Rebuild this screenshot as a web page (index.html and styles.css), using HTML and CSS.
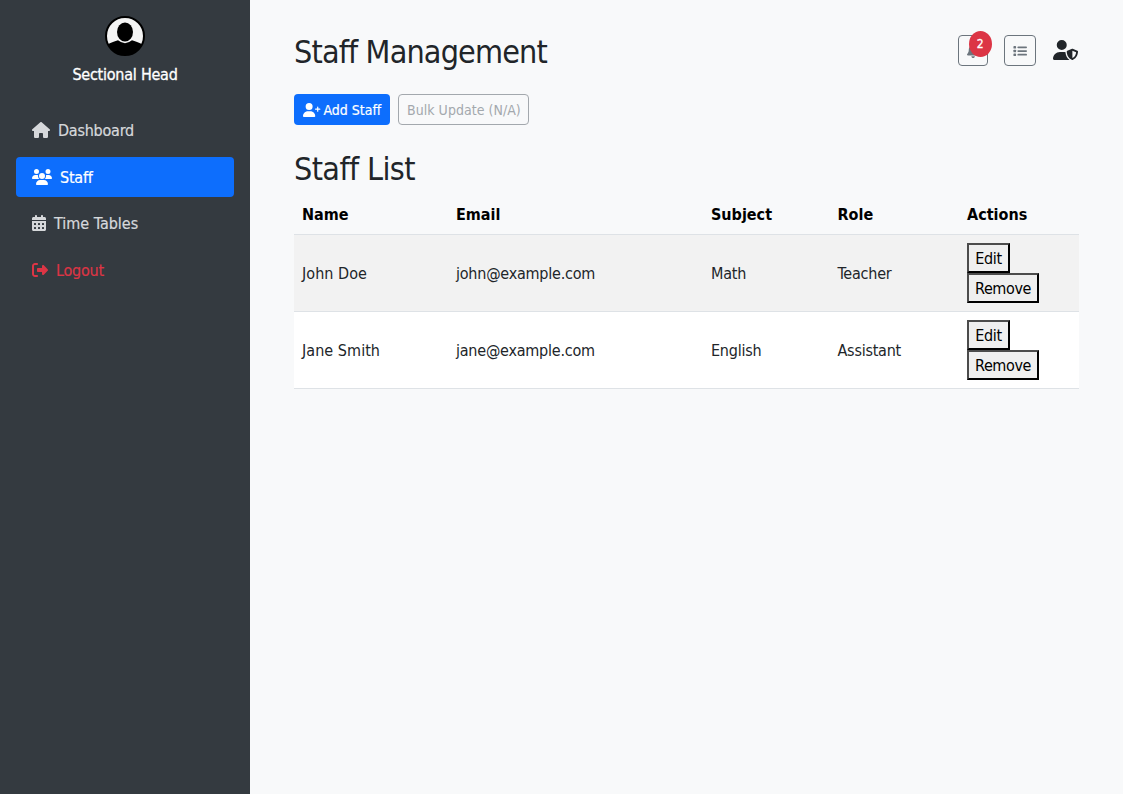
FILE: index.html
```html
<!DOCTYPE html>
<html lang="en">
<head>
<meta charset="utf-8">
<title>Staff Management</title>
<link rel="stylesheet" href="styles.css">
</head>
<body>
<div class="app">
  <aside class="sidebar">
    <div class="profile">
      <svg class="avatar" viewBox="0 0 40 40"><defs><clipPath id="face"><circle cx="20" cy="20" r="19"/></clipPath></defs><circle cx="20" cy="20" r="19" fill="#f4f4f4"/><g clip-path="url(#face)"><path d="M0 40V30Q4 27 13 24.300Q20 30 27 24.300Q36 27 40 30V40Z"/><ellipse cx="20" cy="16" rx="8" ry="9.500"/></g><circle cx="20" cy="20" r="19" fill="none" stroke="#000" stroke-width="2"/></svg>
      <div class="profile-name">Sectional Head</div>
    </div>
    <nav class="nav">
      <a class="nav-link"><svg class="icon house" viewBox="0 0 576 512"><path d="M575.8 255.5c0 18-15 32.1-32 32.1l-32 0 .7 160.2c0 2.7-.2 5.4-.5 8.1l0 16.2c0 22.1-17.9 40-40 40l-16 0c-1.1 0-2.2 0-3.3-.1c-1.4 .1-2.8 .1-4.2 .1L416 512l-24 0c-22.1 0-40-17.9-40-40l0-24 0-64c0-17.7-14.3-32-32-32l-64 0c-17.7 0-32 14.3-32 32l0 64 0 24c0 22.1-17.9 40-40 40l-24 0-31.9 0c-1.5 0-3-.1-4.5-.2c-1.2 .1-2.4 .2-3.6 .2l-16 0c-22.1 0-40-17.9-40-40l0-112c0-.9 0-1.9 .1-2.8l0-69.7-32 0c-18 0-32-14-32-32.1c0-9 3-17 10-24L266.4 8c7-7 15-8 22-8s15 2 21 7L564.8 231.5c8 7 12 15 11 24z"/></svg><span>Dashboard</span></a>
      <a class="nav-link active"><svg class="icon users" viewBox="0 0 640 512"><path d="M144 0a80 80 0 1 1 0 160A80 80 0 1 1 144 0zM512 0a80 80 0 1 1 0 160A80 80 0 1 1 512 0zM0 298.7C0 239.8 47.8 192 106.7 192l42.7 0c15.9 0 31 3.5 44.6 9.7c-1.3 7.2-1.9 14.7-1.9 22.3c0 38.2 16.8 72.5 43.3 96L21.3 320C9.6 320 0 310.4 0 298.7zM405.3 320c26.6-23.5 42.7-57.8 42.7-96c0-7.6-.7-15-1.9-22.3c13.6-6.3 28.7-9.7 44.6-9.7l42.7 0C592.2 192 640 239.8 640 298.7c0 11.8-9.6 21.3-21.3 21.3zM224 224a96 96 0 1 1 192 0 96 96 0 1 1 -192 0zM128 485.3C128 411.7 187.7 352 261.3 352l117.3 0C452.3 352 512 411.7 512 485.3c0 14.7-11.9 26.7-26.7 26.7l-330.7 0c-14.7 0-26.7-11.9-26.7-26.7z"/></svg><span>Staff</span></a>
      <a class="nav-link tables"><svg class="icon calendar" viewBox="0 0 448 512"><path fill-rule="evenodd" d="M128 0c17.7 0 32 14.3 32 32v32h128V32c0-17.7 14.3-32 32-32s32 14.3 32 32v32h48c26.5 0 48 21.5 48 48v48H0v-48C0 85.500 21.500 64 48 64h48V32c0-17.700 14.300-32 32-32zM0 192h448v272c0 26.500-21.500 48-48 48H48c-26.500 0-48-21.500-48-48zM80 256h32q16 0 16 16v32q0 16-16 16H80q-16 0-16-16v-32q0-16 16-16zM208 256h32q16 0 16 16v32q0 16-16 16h-32q-16 0-16-16v-32q0-16 16-16zM336 256h32q16 0 16 16v32q0 16-16 16h-32q-16 0-16-16v-32q0-16 16-16zM80 384h32q16 0 16 16v32q0 16-16 16H80q-16 0-16-16v-32q0-16 16-16zM208 384h32q16 0 16 16v32q0 16-16 16h-32q-16 0-16-16v-32q0-16 16-16zM336 384h32q16 0 16 16v32q0 16-16 16h-32q-16 0-16-16v-32q0-16 16-16z"/></svg><span>Time Tables</span></a>
      <a class="nav-link logout"><svg class="icon exit" viewBox="0 0 512 512"><path d="M377.9 105.900L500.700 228.700c7.200 7.200 11.300 17.100 11.300 27.300s-4.100 20.100-11.300 27.300L377.900 406.100c-6.400 6.400-15 9.900-24 9.900c-18.700 0-33.900-15.200-33.900-33.900V320H192c-17.700 0-32-14.300-32-32v-64c0-17.700 14.300-32 32-32h128v-62.100c0-18.700 15.200-33.900 33.900-33.900c9 0 17.600 3.600 24 9.900zM160 96H96c-17.700 0-32 14.300-32 32v256c0 17.700 14.300 32 32 32h64c17.700 0 32 14.300 32 32s-14.300 32-32 32H96c-53 0-96-43-96-96V128C0 75 43 32 96 32h64c17.700 0 32 14.300 32 32s-14.300 32-32 32z"/></svg><span>Logout</span></a>
    </nav>
  </aside>
  <main class="main">
    <header class="topbar">
      <h2>Staff Management</h2>
      <div class="tools">
        <button class="tool"><svg class="bell" viewBox="0 0 448 512"><path d="M224 0c-17.700 0-32 14.300-32 32v19.200C119 66 64 130.600 64 208v18.800c0 47-17.300 92.400-48.500 127.600l-7.400 8.300c-8.400 9.400-10.400 22.900-5.300 34.400S19.400 416 32 416h384c12.600 0 24-7.400 29.200-18.900s3.100-25-5.300-34.400l-7.400-8.300C401.300 319.200 384 273.900 384 226.800V208c0-77.400-55-142-128-156.800V32c0-17.700-14.300-32-32-32zM269.300 493.300c12-12 18.700-28.300 18.700-45.300H160c0 17 6.700 33.300 18.700 45.300S207 512 224 512s33.300-6.700 45.300-18.700z"/></svg><span class="badge">2</span></button>
        <button class="tool"><svg class="list" viewBox="0 0 512 512"><rect x="16" y="72" width="96" height="96" rx="24"/><rect x="16" y="208" width="96" height="96" rx="24"/><rect x="16" y="344" width="96" height="96" rx="24"/><rect x="160" y="88" width="352" height="64" rx="32"/><rect x="160" y="224" width="352" height="64" rx="32"/><rect x="160" y="360" width="352" height="64" rx="32"/></svg></button>
        <svg class="shield" viewBox="0 0 640 512"><path fill-rule="evenodd" d="M224 256A128 128 0 1 0 224 0a128 128 0 1 0 0 256zm-45.700 48C79.800 304 0 383.800 0 482.300C0 498.700 13.300 512 29.700 512h388.600c1.800 0 3.500-.2 5.300-.5c-76.300-55.100-99.800-141-103.100-200.200c-16.100-4.800-33.100-7.300-50.700-7.300zM487.100 225.700l-120 48C358 277.400 352 286.200 352 296c0 63.300 25.900 168.800 134.800 214.200c5.900 2.500 12.600 2.500 18.500 0C614.100 464.800 640 359.300 640 296c0-9.800-6-18.600-15.100-22.300l-120-48c-5.700-2.300-12.100-2.300-17.800 0zM591.400 312c-3.900 50.700-27.200 116.700-95.400 149.700V273.900z"/></svg>
      </div>
    </header>
    <div class="actions">
      <button class="btn primary"><svg viewBox="0 0 640 512"><path d="M96 128a128 128 0 1 1 256 0A128 128 0 1 1 96 128zM0 482.300C0 383.800 79.800 304 178.300 304h91.400C368.200 304 448 383.800 448 482.300c0 16.400-13.300 29.700-29.700 29.700H29.700C13.300 512 0 498.700 0 482.300zM516 300v-54h-54q-22 0-22-22t22-22h54v-54q0-22 22-22t22 22v54h54q22 0 22 22t-22 22h-54v54q0 22-22 22t-22-22z"/></svg><span>Add Staff</span></button>
      <button class="btn outline" disabled><span>Bulk Update (N/A)</span></button>
    </div>
    <h2 class="list-title">Staff List</h2>
    <table class="table">
      <colgroup><col class="c1"><col class="c2"><col class="c3"><col class="c4"><col class="c5"></colgroup>
      <thead><tr><th>Name</th><th>Email</th><th>Subject</th><th>Role</th><th>Actions</th></tr></thead>
      <tbody>
        <tr class="striped"><td class="name">John Doe</td><td>john@example.com</td><td>Math</td><td>Teacher</td><td class="row-actions"><button class="plain edit">Edit</button><button class="plain remove">Remove</button></td></tr>
        <tr><td class="name">Jane Smith</td><td>jane@example.com</td><td>English</td><td>Assistant</td><td class="row-actions"><button class="plain edit">Edit</button><button class="plain remove">Remove</button></td></tr>
      </tbody>
    </table>
  </main>
</div>
</body>
</html>
```
FILE: styles.css
```css
* { box-sizing: border-box; }
body { margin: 0; background: #f8f9fa; color: #212529; font: 16px/24px "Segoe UI", Tahoma, "DejaVu Sans Condensed", "DejaVu Sans", sans-serif; font-stretch: condensed; letter-spacing: -0.23px; }
button { font: inherit; font-stretch: inherit; letter-spacing: inherit; }
svg { fill: currentColor; display: block; flex: none; }
.app { display: flex; height: 794px; }
.sidebar { width: 250px; background: #343a40; padding: 16px; flex: none; }
.profile { display: flex; flex-direction: column; align-items: center; color: #fff; height: 94px; }
.avatar { width: 40px; height: 40px; fill: #000; }
.profile-name { margin-top: 7px; white-space: nowrap; letter-spacing: -0.24px; -webkit-text-stroke: 0.3px; }
.nav { display: flex; flex-direction: column; gap: 6.67px; }
.nav-link { display: flex; align-items: center; gap: 8px; height: 40px; padding: 0 16px; color: #d6d8db; border-radius: 4px; white-space: nowrap; -webkit-text-stroke: 0.2px; }
.nav-link span { padding-top: 2px; }
.nav-link svg { stroke: none; }
.nav-link.active { background: #0d6efd; color: #fff; }
.nav-link.tables { letter-spacing: 0; }
.nav-link.logout { color: #dc3545; }
.icon { height: 16px; }
.house { width: 18px; }
.users { width: 20px; }
.calendar { width: 14px; }
.exit { width: 16px; }
.main { flex: 1; padding: 32px 44px; }
.topbar { display: flex; justify-content: space-between; height: 38px; }
h2 { margin: 0; padding-top: 1px; font-size: 32px; line-height: 38px; font-weight: 400; letter-spacing: -0.83px; white-space: nowrap; }
.tools { display: flex; align-items: center; gap: 16px; height: 37px; }
.tool { position: relative; height: 31px; border: 1px solid #6c757d; border-radius: 4px; background: transparent; color: #6c757d; padding: 0 8px; display: flex; align-items: center; }
.bell { width: 12.25px; height: 14px; }
.list { width: 14px; height: 14px; }
.shield { width: 25px; height: 20px; margin: -2px 1px 0 1px; }
.badge { position: absolute; left: 10px; top: -5px; width: 23px; height: 26px; border-radius: 50%; background: #dc3545; color: #fff; font-size: 12px; line-height: 27px; text-align: center; letter-spacing: 0; -webkit-text-stroke: 0.3px; }
.actions { display: flex; gap: 8px; margin-top: 24px; }
.btn { height: 31px; border: 1px solid transparent; border-radius: 4px; padding: 0 8px; font-size: 14px; line-height: 21px; display: flex; align-items: center; gap: 3px; white-space: nowrap; letter-spacing: 0; }
.btn span { padding-top: 2px; }
.primary { width: 96px; background: #0d6efd; color: #fff; -webkit-text-stroke: 0.2px; }
.primary svg { width: 17.5px; height: 14px; }
.outline { width: 131px; color: #a3a8ad; border-color: #a3a8ad; background: transparent; letter-spacing: 0.04px; }
.list-title { margin-top: 24px; letter-spacing: -0.6px; }
.table { width: 785px; table-layout: fixed; border-collapse: collapse; margin-top: 6px; }
.c1 { width: 154px; }
.c2 { width: 255px; }
.c3 { width: 126.5px; }
.c4 { width: 129.5px; }
.c5 { width: 120px; }
th, td { padding: 8px; text-align: left; vertical-align: middle; border-bottom: 1px solid #dee2e6; white-space: nowrap; }
td { padding: 9px 8px 7px; }
th { padding: 9px 8px 7px; color: #000; font-weight: 700; letter-spacing: 0; }
.name { letter-spacing: 0.05px; }
td.row-actions { padding: 8px; }
tbody tr { background: #fff; }
tbody tr.striped { background: #f2f2f2; }
.plain { display: block; height: 30px; padding: 2px 5px 0; border: 2px solid; border-color: #4c4c4c #000 #000 #4c4c4c; background: #efefef; color: #000; line-height: 24px; letter-spacing: -0.4px; }
.edit { width: 43px; }
.remove { width: 72px; }
```
